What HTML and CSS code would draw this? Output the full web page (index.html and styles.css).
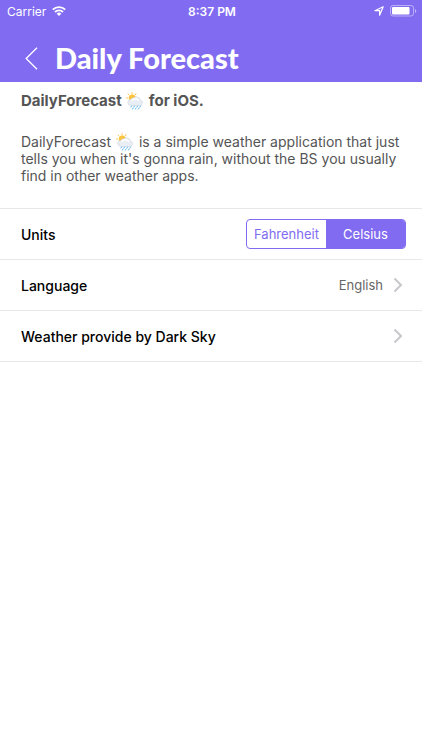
FILE: index.html
```html
<!DOCTYPE html>
<html lang="en">
<head>
  <meta charset="utf-8">
  <meta name="viewport" content="width=device-width, initial-scale=1">
  <title>Daily Forecast</title>
  <link rel="stylesheet" href="styles.css">
</head>
<body>
  <svg class="sprite" aria-hidden="true">
    <symbol id="rain-sun" viewBox="0 0 36 36">
      <g stroke="#fbc84f" stroke-width="2" stroke-linecap="round">
        <path d="M12 1v3M4 4l2 2M1 12h2.500M20 3l-1.500 2.500M4 20l2-2"/>
      </g>
      <circle cx="12.500" cy="12" r="7" fill="#fcc33c"/>
      <path d="M10 27a6 6 0 0 1-.5-12 6 6 0 0 1 6-3.500 8.500 8.500 0 0 1 13.500 4.500 5.600 5.600 0 0 1-.5 11z" fill="#e9edf4" stroke="#cbd1dc" stroke-width="1"/>
      <path d="M12 17a5 5 0 0 1 5-3 6 6 0 0 1 8 3" fill="none" stroke="#fff" stroke-width="3" stroke-linecap="round"/>
      <g stroke="#58b5ee" stroke-width="2" stroke-linecap="round">
        <path d="M11 28l-1 2M17 28l-1 2M23 28l-1 2M29 28l-1 2M14 32l-1 2M20 32l-1 2M26 32l-1 2"/>
      </g>
    </symbol>
    <symbol id="chevron" viewBox="0 0 10 16">
      <path d="M1.500 1.500 8 8l-6.500 6.500" fill="none" stroke="currentColor" stroke-width="2"/>
    </symbol>
  </svg>

  <header class="header">
    <div class="status">
      <div class="status-left">
        <span>Carrier</span>
        <svg class="wifi" viewBox="0 0 14 10" aria-hidden="true">
          <g fill="none" stroke="#fff" stroke-width="1.900">
            <path d="M.8 3.700a8.800 8.800 0 0 1 12.400 0M3 6a5.700 5.700 0 0 1 8 0"/>
          </g>
          <path d="M7 10 4.700 7.700a3.200 3.200 0 0 1 4.600 0z" fill="#fff"/>
        </svg>
      </div>
      <span class="clock">8:37 PM</span>
      <div class="status-right">
        <svg class="location" viewBox="0 0 10 10" aria-hidden="true">
          <path d="M9.200.8 5.600 9.200V4.700H.9z" fill="none" stroke="#fff" stroke-width="1.200" stroke-linejoin="round"/>
        </svg>
        <svg class="battery" viewBox="0 0 27 12" aria-hidden="true">
          <rect x=".5" y=".5" width="23" height="10.500" rx="2.500" fill="none" stroke="#fff" stroke-opacity=".45"/>
          <rect x="2" y="2" width="17.500" height="7.500" rx="1" fill="#fff"/>
          <path d="M25 4v4a2.200 2.200 0 0 0 0-4z" fill="#fff" fill-opacity=".5"/>
        </svg>
      </div>
    </div>
    <div class="navbar">
      <button class="back" type="button" aria-label="Back">
        <svg viewBox="0 0 13 23" aria-hidden="true">
          <path d="M12 .8 1.200 11.500 12 22.200" fill="none" stroke="#fff" stroke-width="1.300"/>
        </svg>
      </button>
      <h1 class="title">Daily Forecast</h1>
    </div>
  </header>

  <main>
    <section class="intro">
      <h2 class="intro-title">DailyForecast <svg class="emoji" role="img" aria-label="Sun behind rain cloud"><use href="#rain-sun"/></svg> for iOS.</h2>
      <p class="intro-text">DailyForecast <svg class="emoji" role="img" aria-label="Sun behind rain cloud"><use href="#rain-sun"/></svg> is a simple weather application that just tells you when it's gonna rain, without the BS you usually find in other weather apps.</p>
    </section>

    <div class="row">
      <span class="row-label" id="units-label">Units</span>
      <div class="segmented" role="radiogroup" aria-labelledby="units-label">
        <label class="segment"><input type="radio" name="units" value="fahrenheit">Fahrenheit</label>
        <label class="segment"><input type="radio" name="units" value="celsius" checked>Celsius</label>
      </div>
    </div>
    <a class="row" href="#language">
      <span class="row-label">Language</span>
      <span class="row-value">English</span>
      <svg class="chevron" aria-hidden="true"><use href="#chevron"/></svg>
    </a>
    <a class="row" href="#dark-sky">
      <span class="row-label">Weather provide by Dark Sky</span>
      <svg class="chevron" aria-hidden="true"><use href="#chevron"/></svg>
    </a>
  </main>
</body>
</html>
```
FILE: styles.css
```css
* {
  box-sizing: border-box;
}

body {
  margin: 0;
  background: #fff;
  color: #000;
  font-family: Inter, "Liberation Sans", sans-serif;
  font-size: 14px;
}

.sprite {
  position: absolute;
  width: 0;
  height: 0;
}

.header {
  background: #816cf1;
  color: #fff;
}

.status {
  display: grid;
  grid-template-columns: 1fr auto 1fr;
  align-items: center;
  height: 22px;
  padding: 0 5px 0 7px;
  font-size: 12px;
}

.status-left,
.status-right {
  display: flex;
  align-items: center;
  gap: 6px;
}

.status-right {
  justify-content: flex-end;
}

.wifi {
  width: 14px;
  height: 10px;
}

.clock {
  font-weight: 600;
}

.location {
  width: 10px;
  height: 10px;
}

.battery {
  width: 27px;
  height: 12px;
}

.navbar {
  display: flex;
  align-items: center;
  height: 60px;
  padding: 12px 21px 0;
}

.back {
  display: flex;
  align-items: center;
  width: 34px;
  height: 36px;
  padding: 0 4px;
  border: 0;
  background: none;
}

.back svg {
  width: 13px;
  height: 23px;
}

.title {
  margin: 0;
  font-family: Lato, "Open Sans", sans-serif;
  font-size: 29px;
  font-weight: 900;
  line-height: 36px;
}

.intro {
  padding: 10px 21px 24px;
  border-bottom: 1px solid #e8e8ea;
  color: #555;
}

.intro-title {
  margin: 0 0 24px;
  font-size: 15px;
  font-weight: 700;
  line-height: 17px;
}

.intro-text {
  margin: 0;
  line-height: 17px;
}

.emoji {
  width: 18px;
  height: 18px;
  margin: -4px 1px;
  vertical-align: 0;
}

.row {
  display: flex;
  align-items: center;
  height: 51px;
  padding: 0 16px 0 21px;
  border-bottom: 1px solid #e8e8ea;
  color: #000;
  text-decoration: none;
}

.row-label {
  flex: 1;
  font-weight: 500;
}

.row-value {
  color: #666;
  font-size: 13px;
}

.chevron {
  width: 10px;
  height: 16px;
  margin: 0 3px 0 10px;
  color: #c7c7cc;
}

.segmented {
  display: grid;
  grid-template-columns: 1fr 1fr;
  width: 160px;
  height: 30px;
  border: 1px solid #816cf1;
  border-radius: 4px;
  overflow: hidden;
}

.segment {
  display: flex;
  align-items: center;
  justify-content: center;
  color: #816cf1;
  font-size: 13px;
}

.segment input {
  appearance: none;
  width: 0;
  height: 0;
  margin: 0;
}

.segment:has(:checked) {
  background: #816cf1;
  color: #fff;
}
```
